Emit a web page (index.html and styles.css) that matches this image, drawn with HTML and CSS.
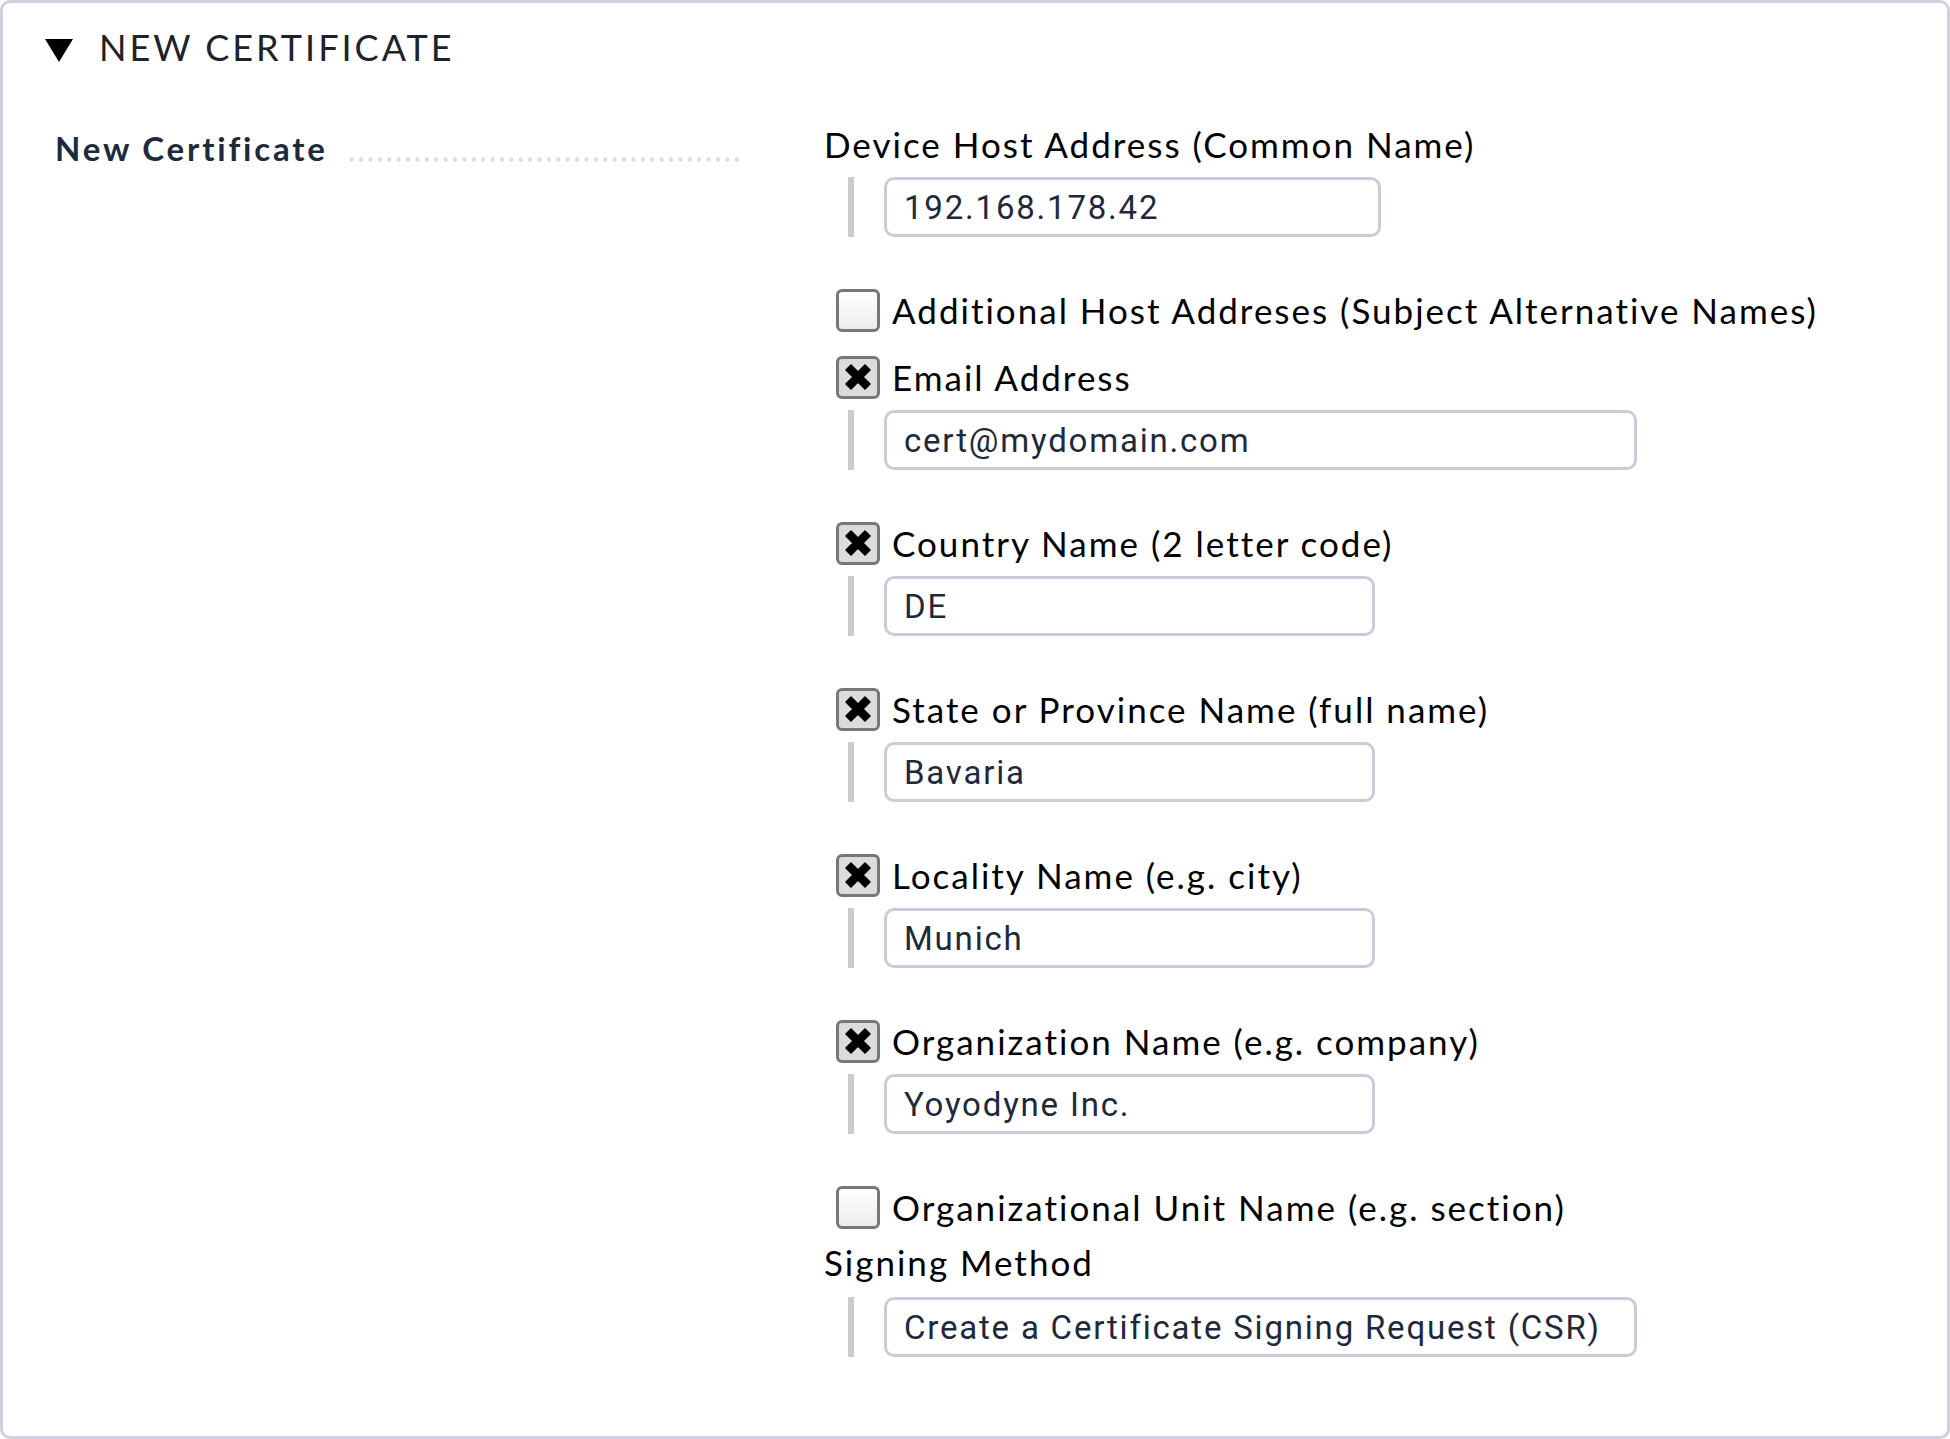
FILE: index.html
```html
<!DOCTYPE html>
<html>
<head>
<meta charset="utf-8">
<link rel="stylesheet" href="styles.css">
</head>
<body>
<div class="panel">
  <div class="head">
    <svg class="tri" width="28" height="23" viewBox="0 0 28 23"><polygon points="0,0 28,0 14,23" fill="#000"/></svg>
    <span class="title">NEW CERTIFICATE</span>
  </div>
  <div class="row">
    <div class="legend">
      <span class="legend-text">New Certificate</span>
      <span class="dots"></span>
    </div>
    <div class="content">
      <div class="label">Device Host Address (Common Name)</div>
      <div class="indent gap-after"><div class="input w-short">192.168.178.42</div></div>

      <div class="check-row gap-small"><span class="cb"></span><span class="label">Additional Host Addreses (Subject Alternative Names)</span></div>

      <div class="check-row"><span class="cb checked"><svg width="30" height="30" viewBox="0 0 30 30"><path d="M3 8 L8 3 L15 10 L22 3 L27 8 L20 15 L27 22 L22 27 L15 20 L8 27 L3 22 L10 15 Z" fill="#000" stroke="#000" stroke-width="1.5" stroke-linejoin="round"/></svg></span><span class="label">Email Address</span></div>
      <div class="indent gap-after"><div class="input w-long">cert@mydomain.com</div></div>

      <div class="check-row"><span class="cb checked"><svg width="30" height="30" viewBox="0 0 30 30"><path d="M3 8 L8 3 L15 10 L22 3 L27 8 L20 15 L27 22 L22 27 L15 20 L8 27 L3 22 L10 15 Z" fill="#000" stroke="#000" stroke-width="1.5" stroke-linejoin="round"/></svg></span><span class="label">Country Name (2 letter code)</span></div>
      <div class="indent gap-after"><div class="input w-mid">DE</div></div>

      <div class="check-row"><span class="cb checked"><svg width="30" height="30" viewBox="0 0 30 30"><path d="M3 8 L8 3 L15 10 L22 3 L27 8 L20 15 L27 22 L22 27 L15 20 L8 27 L3 22 L10 15 Z" fill="#000" stroke="#000" stroke-width="1.5" stroke-linejoin="round"/></svg></span><span class="label">State or Province Name (full name)</span></div>
      <div class="indent gap-after"><div class="input w-mid">Bavaria</div></div>

      <div class="check-row"><span class="cb checked"><svg width="30" height="30" viewBox="0 0 30 30"><path d="M3 8 L8 3 L15 10 L22 3 L27 8 L20 15 L27 22 L22 27 L15 20 L8 27 L3 22 L10 15 Z" fill="#000" stroke="#000" stroke-width="1.5" stroke-linejoin="round"/></svg></span><span class="label">Locality Name (e.g. city)</span></div>
      <div class="indent gap-after"><div class="input w-mid">Munich</div></div>

      <div class="check-row"><span class="cb checked"><svg width="30" height="30" viewBox="0 0 30 30"><path d="M3 8 L8 3 L15 10 L22 3 L27 8 L20 15 L27 22 L22 27 L15 20 L8 27 L3 22 L10 15 Z" fill="#000" stroke="#000" stroke-width="1.5" stroke-linejoin="round"/></svg></span><span class="label">Organization Name (e.g. company)</span></div>
      <div class="indent gap-after"><div class="input w-mid">Yoyodyne Inc.</div></div>

      <div class="check-row gap-tiny"><span class="cb"></span><span class="label">Organizational Unit Name (e.g. section)</span></div>
      <div class="label">Signing Method</div>
      <div class="indent indent-select"><div class="input w-long">Create a Certificate Signing Request (CSR)</div></div>
    </div>
  </div>
</div>
</body>
</html>
```

FILE: styles.css
```css
html, body {
  margin: 0;
  padding: 0;
  background: #ffffff;
}

.panel {
  box-sizing: border-box;
  width: 1950px;
  height: 1439px;
  border: 3px solid #cfd1de;
  border-radius: 10px;
  background: #ffffff;
  font-family: Lato, "Noto Sans", sans-serif;
  font-variant-ligatures: none;
}

.head {
  display: flex;
  align-items: center;
  height: 50px;
  padding: 19px 0 0 42px;
}

.tri {
  display: block;
  margin-top: 6px;
}

.title {
  margin-left: 26px;
  font-size: 36px;
  letter-spacing: 3px;
  color: #1f2329;
}

.row {
  display: flex;
  margin-top: 50px;
}

.legend {
  display: flex;
  align-items: flex-end;
  width: 821px;
  height: 48px;
  padding-left: 52px;
  box-sizing: border-box;
}

.legend-text {
  font-size: 33px;
  font-weight: bold;
  letter-spacing: 2.8px;
  color: #1e2a3b;
  line-height: 44px;
  white-space: nowrap;
}

.dots {
  width: 396px;
  height: 5px;
  margin-left: 19px;
  margin-bottom: 8px;
  background: radial-gradient(circle, #dcdcdc 1.9px, transparent 2.4px) 0 0 / 9.4px 5px repeat-x;
}

.content {
  display: flex;
  flex-direction: column;
}

.label {
  font-size: 35px;
  letter-spacing: 2px;
  line-height: 44px;
  color: #000000;
  white-space: nowrap;
}

.indent {
  display: flex;
  margin-top: 11px;
  margin-left: 24px;
  padding-left: 30px;
  border-left: 6px solid #cccccc;
}

.indent-select {
  margin-top: 13px;
}

.gap-after {
  margin-bottom: 51px;
}

.input {
  box-sizing: border-box;
  height: 60px;
  padding: 0 17px;
  border: 3px solid #cacbdb;
  border-radius: 10px;
  font-family: Roboto, "Liberation Sans", sans-serif;
  font-size: 33px;
  letter-spacing: 1.8px;
  line-height: 55px;
  color: #1e2a3c;
  white-space: nowrap;
}

.w-short { width: 497px; }
.w-mid { width: 491px; }
.w-long { width: 753px; }

.check-row {
  display: flex;
  align-items: center;
  height: 44px;
  margin-left: 12px;
}

.gap-small { margin-bottom: 23px; }
.gap-tiny { margin-bottom: 11px; }

.cb {
  box-sizing: border-box;
  display: flex;
  align-items: center;
  justify-content: center;
  flex: none;
  width: 44px;
  height: 43px;
  margin-right: 12px;
  border: 3px solid #777777;
  border-radius: 6px;
  background: linear-gradient(#ffffff, #ececec);
}

.cb.checked {
  background: #dcdcdc;
}
```
